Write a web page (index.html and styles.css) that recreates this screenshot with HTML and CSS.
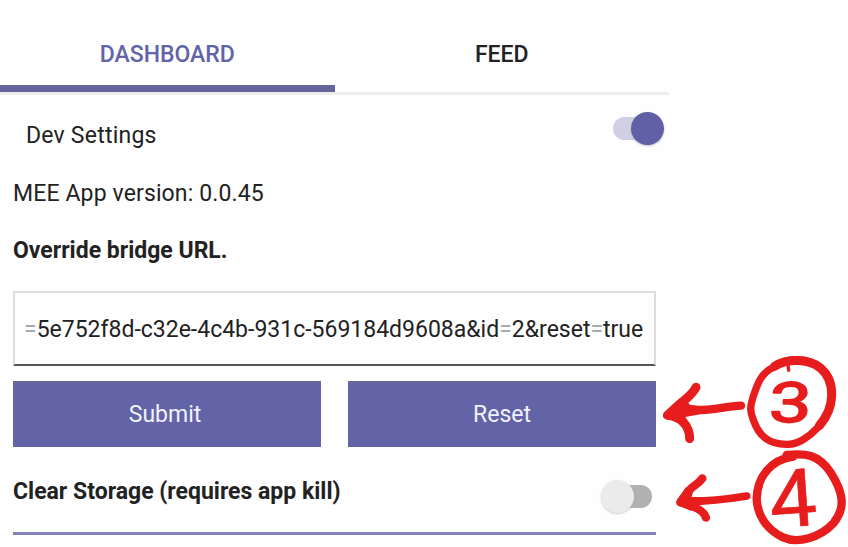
FILE: index.html
```html
<!DOCTYPE html>
<html lang="en">
<head>
<meta charset="utf-8">
<title>Dev Settings</title>
<link rel="stylesheet" href="styles.css">
</head>
<body>
<main class="app">
  <nav class="tabs">
    <a class="tab active"><span>DASHBOARD</span></a>
    <a class="tab"><span>FEED</span></a>
  </nav>
  <div class="row dev">
    <span class="label-dev">Dev Settings</span>
    <span class="switch on"><span class="knob"></span></span>
  </div>
  <section class="content">
    <p class="version">MEE App version: 0.0.45</p>
    <p class="heading">Override bridge URL.</p>
    <div class="field"><span><span class="faint">=</span>5e752f8d-c32e-4c4b-931c-569184d9608a&amp;id<span class="faint">=</span>2&amp;reset<span class="faint">=</span>true</span></div>
    <div class="buttons">
      <button class="submit">Submit</button>
      <button>Reset</button>
    </div>
    <div class="row clear">
      <span class="label-clear">Clear Storage (requires app kill)</span>
      <span class="switch off"><span class="knob"></span></span>
    </div>
  </section>
</main>
<svg class="notes" viewBox="0 0 594 606" fill="none" stroke="#e71d1d" stroke-linecap="round" stroke-linejoin="round">
  <path stroke-width="25" d="M273 182C220 184 180 200 112 194"/>
  <path stroke-width="27" d="M138 127C124 153 104 164 88 178L52 211C88 214 119 239 119 281"/>
  <path fill="#e71d1d" stroke="none" d="M42 205L98 156L120 179L150 184V208L106 216L122 240L104 240L78 226L44 219Z"/>
  <path stroke-width="22" d="M370 67C330 85 320 125 308 160C300 185 300 200 309 222C326 272 355 300 415 298C470 297 548 220 546 145C545 78 500 45 437 44C408 44 386 53 370 66"/>
  <path stroke-width="27" d="M374 64C410 40 475 40 510 68C560 110 554 190 508 242"/>
  <path stroke-width="10" d="M414 60L416 76"/>
  <path stroke-width="23" d="M290 453C230 463 170 469 108 470"/>
  <path stroke-width="25" d="M157 400C143 420 126 423 117 437L91 472C126 482 160 493 168 518"/>
  <path fill="#e71d1d" stroke="none" d="M82 464L108 426L128 444L125 456L158 456V477L126 483L124 498L82 480Z"/>
  <path stroke-width="25" d="M410 330C464 324 505 326 543 384C578 440 590 486 550 535C509 578 444 597 399 577C350 554 321 510 320 460C322 396 362 344 430 335"/>
  <g class="digits">
    <text transform="translate(355 232) skewX(-3) scale(1.36 1)">3</text>
    <text class="four" transform="translate(364 549) rotate(-4) scale(1.05 1)">4</text>
  </g>
</svg>
</body>
</html>
```
FILE: styles.css
```css
* { box-sizing: border-box; }
body { margin: 0; width: 848px; height: 547px; overflow: hidden; background: #fff; font-family: Roboto, "Liberation Sans", sans-serif; font-size: 23px; line-height: 28px; color: #222; }
p { margin: 0; }
.app { width: 669px; height: 547px; background: #fefefe; }
.app span, p { white-space: nowrap; }
.tabs { display: grid; grid-template-columns: 1fr 1fr; height: 95px; border-bottom: 3px solid #ededed; }
.tab { display: flex; justify-content: center; padding-top: 41px; font-weight: 500; }
.active { height: 92px; color: #6264a7; border-bottom: 7px solid #65659b; }
.row { display: flex; align-items: center; justify-content: space-between; }
.dev { height: 66px; padding: 0 5px 0 26px; }
.label-dev { margin-top: 16px; letter-spacing: .22px; }
.switch { display: flex; align-items: center; width: 51px; height: 34px; }
.switch::before { content: ""; height: 23px; width: 38px; border-radius: 12px; flex: none; }
.knob { width: 33px; height: 33px; border-radius: 50%; flex: none; position: relative; }
.on::before { background: #d1cfe5; }
.on .knob { margin-left: -20px; background: #615fa6; box-shadow: 0 1px 2px #8888; }
.off { flex-direction: row-reverse; margin-top: 14px; }
.off::before { background: #b1b1b1; }
.off .knob { margin-right: -20px; background: #ebebeb; box-shadow: 0 1px 2px #aaa8; }
.content { padding: 19px 13px 0; }
.version { height: 57px; letter-spacing: .13px; }
.heading { height: 54px; font-weight: 700; }
.field { height: 75px; border: 2px solid #dddcdf; border-bottom: 2px solid #555; display: flex; align-items: center; padding: 2px 0 0 9px; overflow: hidden; }
.faint { color: #aaa; }
.buttons { display: grid; grid-template-columns: 1fr 1fr; gap: 27px; margin-top: 15px; }
button { height: 66px; border: 0; border-top: 2px solid #686797; padding: 0; background: #6264a7; color: #f1f1fa; font: 400 23px/28px Roboto, sans-serif; }
.submit { padding-right: 4px; }
.clear { height: 88px; border-bottom: 3px solid #8583b7; font-weight: 700; padding-right: 4px; }
.label-clear { margin-top: 5px; }
.notes { position: absolute; left: 650px; top: 345px; width: 198px; height: 202px; }
.digits { font-family: Roboto, sans-serif; font-weight: 400; font-size: 167px; fill: #e71d1d; stroke: #e71d1d; stroke-width: 5px; }
.four { font-size: 240px; stroke-width: 2px; }
```
